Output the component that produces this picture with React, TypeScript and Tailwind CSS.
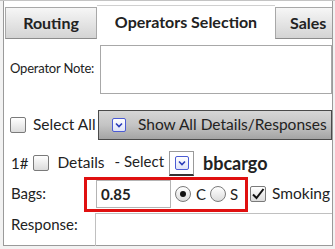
import React from "react";

const font = { fontFamily: "Lato, 'DejaVu Sans', sans-serif" };

const Check = ({ checked = false }: { checked?: boolean }) => (
    <span className="w-[16px] h-[16px] shrink-0 border border-[#7a7a7a] rounded-[2px] bg-gradient-to-b from-white to-[#dcdcdc] flex items-center justify-center">
        {checked && (
            <svg width="14" height="14" viewBox="0 0 14 14">
                <path d="M2 7.5 L5.5 11 L12.5 2" fill="none" stroke="#111" strokeWidth="2" />
            </svg>
        )}
    </span>
);

const Radio = ({ checked = false }: { checked?: boolean }) => (
    <span className="w-[16px] h-[16px] shrink-0 rounded-full border border-[#7a7a7a] bg-gradient-to-b from-white to-[#dcdcdc] flex items-center justify-center">
        {checked && <span className="w-[6px] h-[6px] rounded-full bg-[#111]" />}
    </span>
);

const DropIcon = () => (
    <span className="w-[14px] h-[14px] shrink-0 border border-[#4b5bd4] rounded-[2px] bg-gradient-to-b from-white to-[#dfe3f7] flex items-center justify-center">
        <svg width="8" height="6" viewBox="0 0 8 6">
            <path d="M1 1.5 L4 4.5 L7 1.5" fill="none" stroke="#2a3bb8" strokeWidth="1.6" />
        </svg>
    </span>
);

export default function App() {
    return (
        <div className="w-[335px] h-[249px] bg-[#f2f2f2] border-t border-[#c4c4c4] overflow-hidden text-[#222]" style={font}>
            <div className="ml-[3px] w-[330px] h-[245px] bg-white border-l border-r border-b border-[#9a9a9a] flex flex-col">
                {/* tabs */}
                <div className="flex items-end h-[38px] bg-white pt-[4px]">
                    <div className="ml-[1px] w-[92px] h-[32px] border border-[#a8a8a8] border-b-[#8c8c8c] bg-gradient-to-b from-[#f6f6f6] to-[#d4d4d4] flex items-center justify-center font-bold text-[16px]">
                        Routing
                    </div>
                    <div className="w-[178px] h-[34px] bg-white border-t border-[#d0d0d0] flex items-center justify-center font-bold text-[16px] pb-[2px]">
                        Operators Selection
                    </div>
                    <div className="flex-1 h-[32px] border border-r-0 border-[#a8a8a8] border-b-[#8c8c8c] bg-gradient-to-b from-[#f6f6f6] to-[#d4d4d4] flex items-center pl-[14px] font-bold text-[16px] overflow-hidden whitespace-nowrap">
                        Sales
                    </div>
                </div>

                {/* operator note */}
                <div className="flex items-start h-[58px] pt-[6px]">
                    <div className="w-[96px] pl-[6px] h-[48px] flex items-center text-[13px] tracking-[-0.2px] whitespace-nowrap">Operator Note:</div>
                    <div className="flex-1 h-[49px] border border-[#a8a8a8] bg-white" />
                </div>

                {/* select all row */}
                <div className="flex items-center h-[48px] pt-[8px]">
                    <div className="pl-[6px] flex items-center gap-[7px] w-[94px]">
                        <Check />
                        <span className="text-[15.5px] whitespace-nowrap">Select All</span>
                    </div>
                    <div className="flex-1 h-[30px] border border-[#4a4a4a] bg-gradient-to-b from-[#d6d6d6] via-[#c4c4c4] to-[#a4a4a4] flex items-center pl-[13px] gap-[12px] whitespace-nowrap overflow-hidden">
                        <DropIcon />
                        <span className="text-[15.5px] text-[#222]">Show All Details/Responses</span>
                    </div>
                </div>

                {/* operator row */}
                <div className="flex items-center h-[30px] pt-[6px] whitespace-nowrap">
                    <span className="pl-[7px] text-[15px]">1#</span>
                    <span className="ml-[5px]"><Check /></span>
                    <span className="ml-[8px] text-[15.5px]">Details</span>
                    <span className="ml-[10px] text-[15px] -mt-[4px]">- Select</span>
                    <span className="ml-[5px] w-[25px] h-[25px] border border-[#9a9a9a] border-b-2 border-b-[#333] bg-white flex items-center justify-center">
                        <DropIcon />
                    </span>
                    <span className="ml-[9px] text-[18px] font-bold">bbcargo</span>
                </div>

                {/* bags row */}
                <div className="flex items-center h-[36px] mt-[1px] whitespace-nowrap">
                    <span className="w-[80px] pl-[7px] text-[15px] self-start pt-[6px]">Bags:</span>
                    <div className="h-[35px] w-[164px] border-[3px] border-[#e01010] flex items-center pl-[9px]">
                        <div className="w-[75px] h-[28px] border border-[#b4b4b4] bg-white flex items-center pl-[4px] text-[15px] font-bold">
                            0.85
                        </div>
                        <span className="ml-[4px]"><Radio checked /></span>
                        <span className="ml-[5px] text-[15px]">C</span>
                        <span className="ml-[4px]"><Radio /></span>
                        <span className="ml-[4px] text-[15px]">S</span>
                    </div>
                    <span className="ml-[2px]"><Check checked /></span>
                    <span className="ml-[6px] text-[15.5px]">Smoking</span>
                </div>

                {/* response row */}
                <div className="flex flex-1 items-start">
                    <span className="w-[91px] pl-[7px] text-[15px] pt-[1px]">Response:</span>
                    <div className="flex-1 h-full border-l border-t border-[#c0c0c0] mt-[1px]" />
                </div>
            </div>
        </div>
    );
}
